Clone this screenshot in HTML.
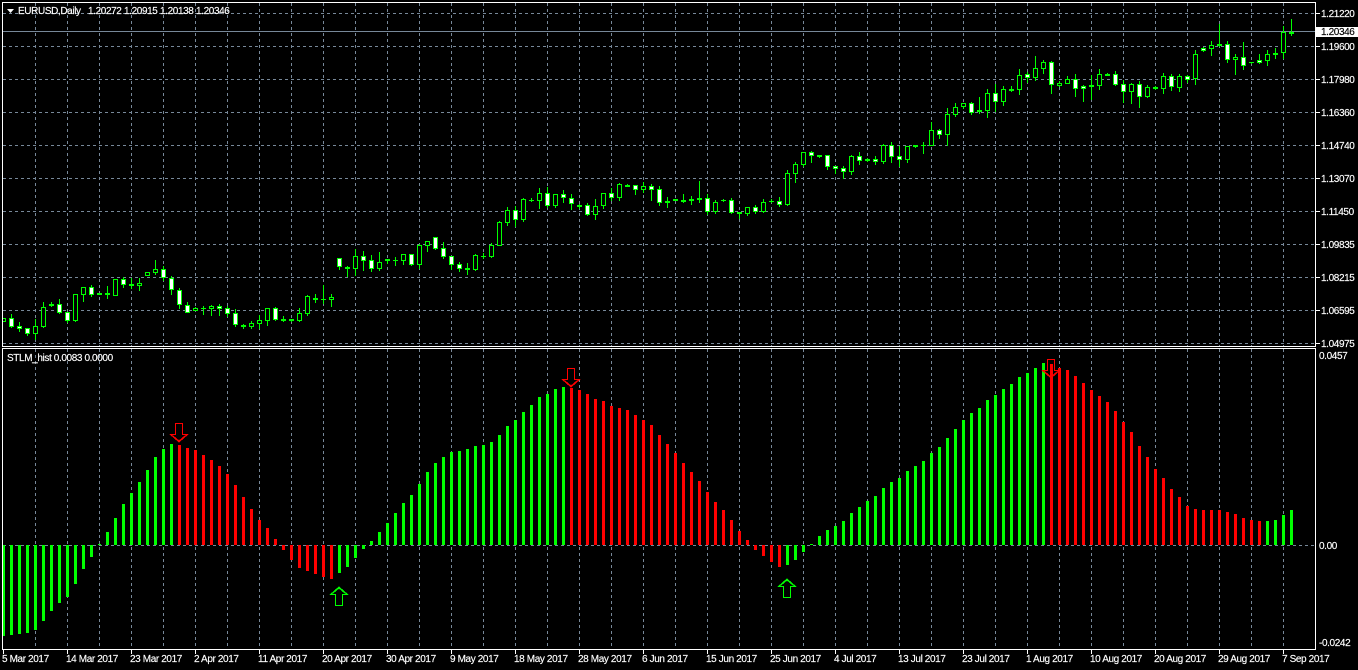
<!DOCTYPE html>
<html><head><meta charset="utf-8"><title>EURUSD,Daily</title>
<style>
html,body{margin:0;padding:0;background:#000;width:1358px;height:670px;overflow:hidden}
svg{display:block}
text{font-family:"Liberation Sans",sans-serif;font-size:10px;letter-spacing:-.38px;fill:#fff;stroke:#fff;stroke-width:.15px}
</style></head><body>
<svg width="1358" height="670" viewBox="0 0 1358 670" xmlns="http://www.w3.org/2000/svg">
<rect width="1358" height="670" fill="#000"/>
<g shape-rendering="crispEdges" fill="none" stroke="#778899">
<path stroke-dasharray="3 3" d="M35.5 3V346M67.5 3V346M99.5 3V346M131.5 3V346M163.5 3V346M195.5 3V346M227.5 3V346M259.5 3V346M291.5 3V346M323.5 3V346M355.5 3V346M387.5 3V346M419.5 3V346M451.5 3V346M483.5 3V346M515.5 3V346M547.5 3V346M579.5 3V346M611.5 3V346M643.5 3V346M675.5 3V346M707.5 3V346M739.5 3V346M771.5 3V346M803.5 3V346M835.5 3V346M867.5 3V346M899.5 3V346M931.5 3V346M963.5 3V346M995.5 3V346M1027.5 3V346M1059.5 3V346M1091.5 3V346M1123.5 3V346M1155.5 3V346M1187.5 3V346M1219.5 3V346M1251.5 3V346M1283.5 3V346
M35.5 349V649M67.5 349V649M99.5 349V649M131.5 349V649M163.5 349V649M195.5 349V649M227.5 349V649M259.5 349V649M291.5 349V649M323.5 349V649M355.5 349V649M387.5 349V649M419.5 349V649M451.5 349V649M483.5 349V649M515.5 349V649M547.5 349V649M579.5 349V649M611.5 349V649M643.5 349V649M675.5 349V649M707.5 349V649M739.5 349V649M771.5 349V649M803.5 349V649M835.5 349V649M867.5 349V649M899.5 349V649M931.5 349V649M963.5 349V649M995.5 349V649M1027.5 349V649M1059.5 349V649M1091.5 349V649M1123.5 349V649M1155.5 349V649M1187.5 349V649M1219.5 349V649M1251.5 349V649M1283.5 349V649"/>
<path stroke-dasharray="3 3" d="M3 13.5H1315M3 46.5H1315M3 79.5H1315M3 112.5H1315M3 145.5H1315M3 178.5H1315M3 211.5H1315M3 244.5H1315M3 277.5H1315M3 310.5H1315M3 343.5H1315M3 545.5H1315"/>
<path d="M3 31.5H1315"/>
</g>
<!-- wicks -->
<path shape-rendering="crispEdges" fill="none" stroke="#00ff00" d="M11.5 314V328M19.5 322V332M27.5 328V336M35.5 319V340M43.5 302V328M51.5 302V307M59.5 299V314M67.5 312V323M75.5 294V322M83.5 287V302M91.5 285V297M107.5 286V299M115.5 279V296M123.5 277V288M131.5 278V289M139.5 278V291M147.5 272V276M155.5 260V275M163.5 266V281M171.5 276V295M179.5 288V309M187.5 302V313M195.5 307V311M203.5 306V315M211.5 305V316M219.5 304V316M227.5 306V317M235.5 309V327M243.5 324V329M251.5 321V329M259.5 315V329M267.5 308V326M275.5 307V321M283.5 316V322M291.5 319V322M299.5 308V322M307.5 295V316M315.5 294V303M323.5 285V304M331.5 294V307M339.5 258V270M347.5 266V277M355.5 249V276M363.5 251V271M371.5 255V272M379.5 252V271M387.5 259V264M395.5 257V266M403.5 254V265M411.5 254V266M419.5 244V269M427.5 241V252M435.5 237V250M443.5 242V259M451.5 256V270M459.5 262V272M467.5 263V275M475.5 254V271M483.5 253V259M491.5 243V258M499.5 221V246M507.5 207V226M515.5 206V227M523.5 198V222M531.5 198V202M539.5 188V209M547.5 187V208M555.5 194V208M563.5 190V203M571.5 194V210M579.5 204V209M587.5 203V216M595.5 199V220M603.5 193V209M611.5 188V201M619.5 183V201M627.5 184V187M635.5 185V195M643.5 182V193M651.5 184V201M659.5 186V206M667.5 197V208M683.5 194V203M691.5 196V205M699.5 181V203M707.5 194V215M715.5 200V214M723.5 199V202M731.5 198V214M739.5 212V219M747.5 207V216M755.5 205V214M763.5 199V213M771.5 199V203M779.5 197V207M787.5 170V206M795.5 162V183M803.5 152V167M811.5 151V163M819.5 155V158M827.5 155V170M835.5 166V174M843.5 166V179M851.5 155V175M859.5 152V165M867.5 158V162M875.5 156V165M883.5 144V164M891.5 142V163M899.5 146V167M907.5 146V163M915.5 145V148M923.5 142V154M931.5 122V146M939.5 129V139M947.5 108V146M955.5 103V117M963.5 103V109M971.5 102V115M979.5 97V114M987.5 89V118M995.5 84V112M1003.5 86V106M1011.5 86V92M1019.5 69V95M1027.5 72V83M1035.5 56V81M1043.5 60V74M1051.5 61V94M1059.5 81V87M1067.5 76V84M1075.5 74V97M1083.5 85V102M1091.5 75V100M1099.5 69V90M1107.5 73V76M1115.5 71V86M1123.5 80V103M1131.5 83V104M1139.5 81V108M1147.5 85V98M1155.5 86V90M1163.5 73V94M1171.5 74V91M1179.5 74V92M1187.5 75V83M1195.5 50V85M1203.5 47V52M1211.5 41V56M1219.5 24V47M1227.5 41V63M1235.5 54V75M1243.5 42V70M1251.5 62V64M1259.5 54V64M1267.5 50V66M1275.5 48V59M1283.5 26V59M1291.5 19V36"/>
<!-- hollow bodies -->
<path shape-rendering="crispEdges" fill="#000" stroke="#00ff00" d="M1.5 318.5h4V321.5h-4zM33.5 326.5h4V333.5h-4zM41.5 307.5h4V326.5h-4zM73.5 294.5h4V320.5h-4zM81.5 287.5h4V294.5h-4zM113.5 279.5h4V295.5h-4zM137.5 283.5h4V285.5h-4zM145.5 272.5h4V275.5h-4zM153.5 269.5h4V272.5h-4zM193.5 308.5h4V310.5h-4zM209.5 306.5h4V308.5h-4zM249.5 323.5h4V326.5h-4zM257.5 320.5h4V323.5h-4zM265.5 308.5h4V320.5h-4zM297.5 313.5h4V320.5h-4zM305.5 296.5h4V313.5h-4zM329.5 297.5h4V299.5h-4zM353.5 256.5h4V268.5h-4zM377.5 262.5h4V268.5h-4zM401.5 254.5h4V260.5h-4zM417.5 245.5h4V264.5h-4zM425.5 241.5h4V245.5h-4zM473.5 255.5h4V269.5h-4zM489.5 245.5h4V256.5h-4zM497.5 222.5h4V245.5h-4zM505.5 210.5h4V222.5h-4zM521.5 199.5h4V219.5h-4zM537.5 193.5h4V200.5h-4zM553.5 194.5h4V205.5h-4zM577.5 205.5h4V206.5h-4zM593.5 206.5h4V214.5h-4zM601.5 193.5h4V205.5h-4zM617.5 184.5h4V197.5h-4zM641.5 186.5h4V189.5h-4zM665.5 201.5h4V202.5h-4zM689.5 199.5h4V200.5h-4zM713.5 202.5h4V211.5h-4zM745.5 207.5h4V213.5h-4zM761.5 202.5h4V211.5h-4zM785.5 173.5h4V204.5h-4zM793.5 164.5h4V173.5h-4zM801.5 152.5h4V164.5h-4zM849.5 156.5h4V171.5h-4zM881.5 145.5h4V161.5h-4zM905.5 146.5h4V159.5h-4zM929.5 130.5h4V145.5h-4zM945.5 114.5h4V134.5h-4zM953.5 107.5h4V114.5h-4zM961.5 103.5h4V106.5h-4zM977.5 110.5h4V111.5h-4zM985.5 93.5h4V110.5h-4zM1001.5 89.5h4V101.5h-4zM1017.5 75.5h4V89.5h-4zM1033.5 68.5h4V77.5h-4zM1041.5 62.5h4V68.5h-4zM1057.5 83.5h4V85.5h-4zM1065.5 79.5h4V83.5h-4zM1097.5 74.5h4V85.5h-4zM1129.5 84.5h4V91.5h-4zM1145.5 87.5h4V96.5h-4zM1161.5 76.5h4V88.5h-4zM1177.5 76.5h4V87.5h-4zM1193.5 54.5h4V78.5h-4zM1209.5 45.5h4V48.5h-4zM1233.5 57.5h4V59.5h-4zM1265.5 54.5h4V60.5h-4zM1281.5 32.5h4V52.5h-4z"/>
<!-- white bodies -->
<path shape-rendering="crispEdges" fill="#fff" stroke="#00ff00" d="M9.5 318.5h4V326.5h-4zM17.5 326.5h4V328.5h-4zM25.5 328.5h4V333.5h-4zM57.5 304.5h4V312.5h-4zM65.5 312.5h4V320.5h-4zM89.5 287.5h4V294.5h-4zM121.5 279.5h4V284.5h-4zM161.5 269.5h4V277.5h-4zM169.5 278.5h4V289.5h-4zM177.5 290.5h4V304.5h-4zM185.5 305.5h4V312.5h-4zM217.5 306.5h4V308.5h-4zM225.5 308.5h4V313.5h-4zM233.5 313.5h4V324.5h-4zM273.5 308.5h4V319.5h-4zM337.5 258.5h4V266.5h-4zM361.5 256.5h4V260.5h-4zM369.5 260.5h4V268.5h-4zM409.5 254.5h4V264.5h-4zM433.5 237.5h4V248.5h-4zM441.5 248.5h4V256.5h-4zM449.5 256.5h4V264.5h-4zM457.5 264.5h4V268.5h-4zM513.5 210.5h4V219.5h-4zM545.5 193.5h4V205.5h-4zM561.5 194.5h4V197.5h-4zM569.5 198.5h4V203.5h-4zM585.5 205.5h4V214.5h-4zM609.5 193.5h4V197.5h-4zM633.5 185.5h4V189.5h-4zM649.5 186.5h4V189.5h-4zM657.5 189.5h4V202.5h-4zM705.5 198.5h4V211.5h-4zM729.5 200.5h4V212.5h-4zM753.5 207.5h4V211.5h-4zM777.5 201.5h4V204.5h-4zM809.5 152.5h4V155.5h-4zM825.5 155.5h4V166.5h-4zM833.5 166.5h4V168.5h-4zM841.5 168.5h4V171.5h-4zM857.5 156.5h4V160.5h-4zM873.5 159.5h4V161.5h-4zM889.5 145.5h4V156.5h-4zM897.5 156.5h4V159.5h-4zM937.5 130.5h4V134.5h-4zM969.5 103.5h4V112.5h-4zM993.5 93.5h4V101.5h-4zM1025.5 74.5h4V77.5h-4zM1049.5 62.5h4V84.5h-4zM1073.5 79.5h4V88.5h-4zM1081.5 86.5h4V88.5h-4zM1113.5 74.5h4V84.5h-4zM1121.5 84.5h4V91.5h-4zM1137.5 84.5h4V96.5h-4zM1169.5 76.5h4V86.5h-4zM1185.5 76.5h4V79.5h-4zM1201.5 48.5h4V50.5h-4zM1225.5 44.5h4V59.5h-4zM1241.5 57.5h4V65.5h-4zM1257.5 60.5h4V62.5h-4z"/>
<!-- flat + cross bodies -->
<path shape-rendering="crispEdges" fill="#00ff00" d="M49 304h5v2h-5zM97 293h5v2h-5zM105 293h5v2h-5zM129 284h5v2h-5zM241 325h5v2h-5zM281 319h5v2h-5zM289 319h5v2h-5zM313 298h5v2h-5zM345 267h5v2h-5zM385 259h5v2h-5zM465 268h5v2h-5zM625 185h5v2h-5zM673 199h5v2h-5zM681 200h5v2h-5zM697 198h5v2h-5zM737 212h5v2h-5zM817 155h5v2h-5zM865 159h5v2h-5zM913 145h5v2h-5zM1009 89h5v2h-5zM1089 85h5v2h-5zM1105 74h5v2h-5zM1153 87h5v2h-5zM1217 44h5v2h-5zM1273 53h5v2h-5zM1289 32h5v2h-5zM201 308h5v1h-5zM321 299h5v1h-5zM393 260h5v1h-5zM481 256h5v1h-5zM529 200h5v1h-5zM721 200h5v1h-5zM769 201h5v1h-5zM921 145h5v1h-5zM1249 62h5v1h-5z"/>
<!-- histogram green -->
<path shape-rendering="crispEdges" fill="none" stroke="#00ff00" stroke-width="3" d="M3.5 636V545M11.5 635V545M19.5 634V545M27.5 633V545M35.5 630V545M43.5 621V545M51.5 611V545M59.5 603V545M67.5 597V545M75.5 584V545M83.5 569V545M91.5 557V545M99.5 544V545M107.5 532V545M115.5 518V545M123.5 504V545M131.5 493V545M139.5 482V545M147.5 470V545M155.5 457V545M163.5 449V545M171.5 444V545M339.5 573V545M347.5 567V545M355.5 558V545M363.5 549V545M371.5 541V545M379.5 532V545M387.5 523V545M395.5 513V545M403.5 503V545M411.5 495V545M419.5 484V545M427.5 472V545M435.5 463V545M443.5 457V545M451.5 452V545M459.5 451V545M467.5 449V545M475.5 446V545M483.5 445V545M491.5 442V545M499.5 435V545M507.5 426V545M515.5 420V545M523.5 412V545M531.5 405V545M539.5 397V545M547.5 394V545M555.5 389V545M563.5 387V545M787.5 565V545M795.5 560V545M803.5 552V545M811.5 544V545M819.5 536V545M827.5 530V545M835.5 526V545M843.5 521V545M851.5 513V545M859.5 507V545M867.5 501V545M875.5 496V545M883.5 488V545M891.5 482V545M899.5 478V545M907.5 471V545M915.5 466V545M923.5 461V545M931.5 453V545M939.5 447V545M947.5 438V545M955.5 429V545M963.5 420V545M971.5 413V545M979.5 408V545M987.5 400V545M995.5 395V545M1003.5 389V545M1011.5 384V545M1019.5 377V545M1027.5 373V545M1035.5 368V545M1043.5 363V545M1267.5 521V545M1275.5 520V545M1283.5 515V545M1291.5 510V545"/>
<!-- histogram red -->
<path shape-rendering="crispEdges" fill="none" stroke="#ff0000" stroke-width="3" d="M179.5 445V545M187.5 448V545M195.5 450V545M203.5 455V545M211.5 460V545M219.5 466V545M227.5 474V545M235.5 485V545M243.5 497V545M251.5 509V545M259.5 520V545M267.5 528V545M275.5 539V545M283.5 550V545M291.5 560V545M299.5 568V545M307.5 571V545M315.5 574V545M323.5 577V545M331.5 579V545M571.5 388V545M579.5 390V545M587.5 394V545M595.5 399V545M603.5 401V545M611.5 406V545M619.5 408V545M627.5 410V545M635.5 415V545M643.5 420V545M651.5 425V545M659.5 435V545M667.5 444V545M675.5 453V545M683.5 463V545M691.5 472V545M699.5 481V545M707.5 492V545M715.5 502V545M723.5 510V545M731.5 520V545M739.5 531V545M747.5 540V545M755.5 550V545M763.5 556V545M771.5 562V545M779.5 567V545M1051.5 364V545M1059.5 368V545M1067.5 370V545M1075.5 376V545M1083.5 383V545M1091.5 390V545M1099.5 396V545M1107.5 402V545M1115.5 411V545M1123.5 422V545M1131.5 432V545M1139.5 446V545M1147.5 457V545M1155.5 469V545M1163.5 478V545M1171.5 489V545M1179.5 497V545M1187.5 506V545M1195.5 509V545M1203.5 510V545M1211.5 510V545M1219.5 510V545M1227.5 512V545M1235.5 514V545M1243.5 518V545M1251.5 520V545M1259.5 521V545"/>
<!-- arrows -->
<g fill="none" stroke="#ff0000" shape-rendering="crispEdges">
<path d="M175.5 423.5H182.5V434.5H187.5L179 442L170.5 434.5H175.5Z"/>
<path d="M172.5 435.5L179 441L185.5 435.5"/>
<path d="M567.5 368.5H574.5V379.5H579.5L571 387L562.5 379.5H567.5Z"/>
<path d="M564.5 380.5L571 386L577.5 380.5"/>
<path d="M1047.5 359.5H1054.5V370.5H1059.5L1051 378L1042.5 370.5H1047.5Z"/>
<path d="M1044.5 371.5L1051 377L1057.5 371.5"/>
</g>
<g fill="none" stroke="#00ff00" shape-rendering="crispEdges">
<path d="M335.5 605.5H342.5V594.5H347.5L339 587L330.5 594.5H335.5Z"/>
<path d="M332.5 593.5L339 588L345.5 593.5"/>
<path d="M783.5 597.5H790.5V586.5H795.5L787 579L778.5 586.5H783.5Z"/>
<path d="M780.5 585.5L787 580L793.5 585.5"/>
</g>
<!-- frame -->
<rect x="0" y="0" width="2" height="660" fill="#000"/>
<path shape-rendering="crispEdges" fill="none" stroke="#fff" d="M2.5 2.5H1315.5V346.5H2.5ZM2.5 348.5H1315.5V649.5H2.5Z"/>
<path shape-rendering="crispEdges" stroke="#fff" d="M1316 13.5h4M1316 46.5h4M1316 79.5h4M1316 112.5h4M1316 145.5h4M1316 178.5h4M1316 211.5h4M1316 244.5h4M1316 277.5h4M1316 310.5h4M1316 343.5h4M3.5 650v4M67.5 650v4M131.5 650v4M195.5 650v4M259.5 650v4M323.5 650v4M387.5 650v4M451.5 650v4M515.5 650v4M579.5 650v4M643.5 650v4M707.5 650v4M771.5 650v4M835.5 650v4M899.5 650v4M963.5 650v4M1027.5 650v4M1091.5 650v4M1155.5 650v4M1219.5 650v4M1283.5 650v4"/>
<rect x="1316" y="27" width="42" height="10" fill="#fff"/>
<path fill="#fff" d="M7 9h7l-3.5 4z"/>
<text x="18" y="14">EURUSD,Daily</text>
<text x="88" y="14">1.20272</text>
<text x="124" y="14">1.20915</text>
<text x="160" y="14">1.20138</text>
<text x="196" y="14">1.20346</text>
<text x="7" y="361">STLM_hist 0.0083 0.0000</text>
<text x="1321" y="17">1.21220</text>
<text x="1321" y="35" style="fill:#000;stroke:#000">1.20346</text>
<text x="1321" y="50">1.19600</text>
<text x="1321" y="83">1.17980</text>
<text x="1321" y="116">1.16360</text>
<text x="1321" y="149">1.14740</text>
<text x="1321" y="182">1.13070</text>
<text x="1321" y="215">1.11450</text>
<text x="1321" y="248">1.09835</text>
<text x="1321" y="281">1.08215</text>
<text x="1321" y="314">1.06595</text>
<text x="1321" y="347">1.04975</text>
<text x="1319" y="359">0.0457</text>
<text x="1319" y="549">0.00</text>
<text x="1319" y="646">-0.0242</text>
<text x="2" y="662">5 Mar 2017</text>
<text x="66" y="662">14 Mar 2017</text>
<text x="130" y="662">23 Mar 2017</text>
<text x="194" y="662">2 Apr 2017</text>
<text x="258" y="662">11 Apr 2017</text>
<text x="322" y="662">20 Apr 2017</text>
<text x="386" y="662">30 Apr 2017</text>
<text x="450" y="662">9 May 2017</text>
<text x="514" y="662">18 May 2017</text>
<text x="578" y="662">28 May 2017</text>
<text x="642" y="662">6 Jun 2017</text>
<text x="706" y="662">15 Jun 2017</text>
<text x="770" y="662">25 Jun 2017</text>
<text x="834" y="662">4 Jul 2017</text>
<text x="898" y="662">13 Jul 2017</text>
<text x="962" y="662">23 Jul 2017</text>
<text x="1026" y="662">1 Aug 2017</text>
<text x="1090" y="662">10 Aug 2017</text>
<text x="1154" y="662">20 Aug 2017</text>
<text x="1218" y="662">29 Aug 2017</text>
<text x="1282" y="662">7 Sep 2017</text>
</svg>
</body></html>
